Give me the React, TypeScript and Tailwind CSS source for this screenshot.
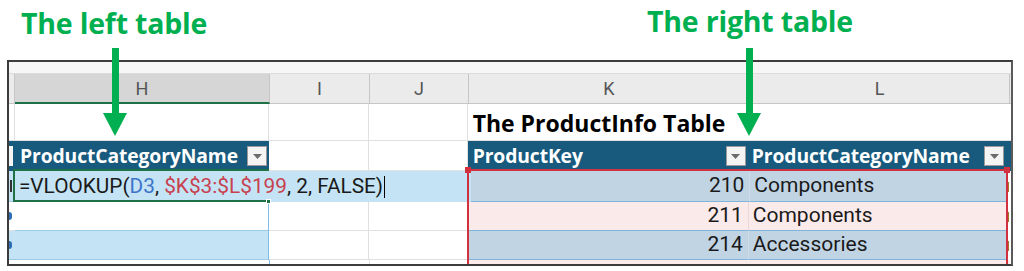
import React from 'react'

const cols = [
  { key: 'G', w: 6 },
  { key: 'H', w: 255 },
  { key: 'I', w: 100 },
  { key: 'J', w: 99 },
  { key: 'K', w: 281 },
  { key: 'L', w: 260 },
  { key: 'M', w: 4 },
]

const cellFont = { fontFamily: 'Roboto, "Liberation Sans", sans-serif' }
const boldFont = { fontFamily: '"Open Sans", sans-serif' }

function Dropdown() {
  return (
    <span className="w-[20px] h-[20px] bg-[#f4f4f4] border border-[#9a9a9a] flex items-center justify-center flex-shrink-0">
      <svg width="9" height="5" viewBox="0 0 9 5">
        <path d="M0 0 H9 L4.5 5 Z" fill="#6b6b6b" />
      </svg>
    </span>
  )
}

function Arrow({ left }: { left: string }) {
  return (
    <div className={`absolute top-[48px] ${left} w-[24px] h-[88px] flex flex-col items-center pointer-events-none`}>
      <div className="w-[7px] h-[65px] bg-[#00b050]" />
      <svg width="24" height="23" viewBox="0 0 24 23">
        <path d="M0 0 H24 L12 23 Z" fill="#00b050" />
      </svg>
    </div>
  )
}

export default function App() {
  const headerBg = (k: string) => (k === 'H' ? 'bg-[#d6d6d6]' : 'bg-[#ebebeb]')

  return (
    <div className="w-[1024px] h-[271px] bg-white relative overflow-hidden" style={cellFont}>
      {/* labels */}
      <div className="h-[60px] relative" style={boldFont}>
        <span className="absolute left-[21px] top-[2px] text-[28.5px] font-bold text-[#00b050] tracking-[-0.2px]">
          The left table
        </span>
        <span className="absolute left-[647px] top-[0px] text-[28.5px] font-bold text-[#00b050] tracking-[-0.2px]">
          The right table
        </span>
      </div>

      {/* sheet */}
      <div className="ml-[7px] w-[1006px] h-[206px] border-2 border-[#3c3c3c] border-r-[#5a5a5a] relative overflow-hidden">
        {/* top strip */}
        <div className="h-[12px] bg-[#f6f6f6] border-b border-[#dcdcdc]" />

        {/* column headers */}
        <div className="flex h-[30px]">
          {cols.map((c) => (
            <div
              key={c.key}
              style={{ width: c.w }}
              className={`${headerBg(c.key)} border-r border-[#c6c6c6] flex items-center justify-center text-[18px] text-[#555] flex-shrink-0 ${c.key === 'H' ? 'border-b-2 border-b-[#1e7145]' : 'border-b border-b-[#c6c6c6]'}`}
            >
              {c.key === 'G' || c.key === 'M' ? '' : c.key}
            </div>
          ))}
        </div>

        {/* row 1 */}
        <div className="flex h-[37px]">
          <div className="w-[6px] border-r border-b border-[#e0e0e0]" />
          <div className="w-[255px] border-r border-b border-[#e0e0e0]" />
          <div className="w-[100px] border-r border-b border-[#e0e0e0]" />
          <div className="w-[99px] border-r border-b border-[#e0e0e0]" />
          <div className="w-[541px] flex items-end pl-[5px] pb-[0px] border-b border-[#e0e0e0] text-[23px] font-bold text-black whitespace-nowrap" style={boldFont}>
            The ProductInfo Table
          </div>
          <div className="w-[4px] border-b border-[#e0e0e0]" />
        </div>

        {/* row 2 - table headers */}
        <div className="flex h-[30px]" style={boldFont}>
          <div className="w-[6px] bg-[#185a7d] flex items-center">
            <span className="w-[4px] h-[20px] bg-[#f4f4f4]" />
          </div>
          <div className="w-[255px] bg-[#185a7d] flex items-center justify-between pl-[5px] pr-[2px] text-[19.3px] font-bold text-white tracking-[-0.1px]">
            <span>ProductCategoryName</span>
            <Dropdown />
          </div>
          <div className="w-[100px] border-r border-b border-[#e0e0e0]" />
          <div className="w-[99px] border-r border-b border-[#e0e0e0]" />
          <div className="w-[281px] bg-[#185a7d] flex items-center justify-between pl-[5px] pr-[2px] text-[19.3px] font-bold text-white tracking-[-0.1px]">
            <span>ProductKey</span>
            <Dropdown />
          </div>
          <div className="w-[260px] bg-[#185a7d] flex items-center justify-between pl-[4px] pr-[3px] text-[19.3px] font-bold text-white tracking-[-0.1px]">
            <span>ProductCategoryName</span>
            <Dropdown />
          </div>
          <div className="w-[4px] bg-[#185a7d]" />
        </div>

        {/* row 3 - formula */}
        <div className="flex h-[31px]">
          <div className="w-[6px] bg-[#c4e4f5] border-b border-[#9cc9e6] flex items-center">
            <span className="w-[2px] h-[12px] bg-[#333] ml-[1px]" />
          </div>
          <div className="w-[460px] bg-[#c4e4f5] flex items-center pl-[4px] text-[20.8px] text-[#1a1a1a] whitespace-nowrap">
            <span>=VLOOKUP(</span>
            <span className="text-[#3e74c9]">D3</span>
            <span>,&nbsp;</span>
            <span className="text-[#c8414f]">$K$3:$L$199</span>
            <span>, 2, FALSE)</span>
            <span className="w-[1px] h-[22px] bg-black ml-[1px]" />
          </div>
          <div className="w-[281px] bg-[#c1d4e4] border-b border-[#7fb5dc] flex items-center justify-end pr-[5px] text-[21px] text-[#1a1a1a]">
            210
          </div>
          <div className="w-[260px] bg-[#c1d4e4] border-b border-l border-[#7fb5dc] border-l-[#d0dbe6] flex items-center pl-[4px] text-[21px] text-[#1a1a1a]">
            Components
          </div>
          <div className="w-[4px] flex items-center"><span className="w-[2px] h-[10px] bg-[#a5752a]" /></div>
        </div>

        {/* row 4 */}
        <div className="flex h-[29px]">
          <div className="w-[6px] border-b border-[#e0e0e0] flex items-center">
            <span className="w-[3px] h-[8px] bg-[#2f6db4] rounded-r-full" />
          </div>
          <div className="w-[255px] border-r border-r-[#7fbde6] border-b border-b-[#9cc9e6]" />
          <div className="w-[100px] border-r border-b border-[#e0e0e0]" />
          <div className="w-[99px] border-r border-b border-[#e0e0e0]" />
          <div className="w-[281px] bg-[#fbeaea] border-b border-[#7fb5dc] flex items-center justify-end pr-[5px] text-[21px] text-[#1a1a1a]">
            211
          </div>
          <div className="w-[260px] bg-[#fbeaea] border-b border-l border-[#7fb5dc] border-l-[#ead7d7] flex items-center pl-[4px] text-[21px] text-[#1a1a1a]">
            Components
          </div>
          <div className="w-[4px] flex items-center"><span className="w-[2px] h-[10px] bg-[#a5752a]" /></div>
        </div>

        {/* row 5 */}
        <div className="flex h-[29px]">
          <div className="w-[6px] bg-[#c4e4f5] border-b border-[#9cc9e6] flex items-center">
            <span className="w-[3px] h-[8px] bg-[#2f6db4] rounded-r-full" />
          </div>
          <div className="w-[255px] bg-[#c4e4f5] border-r border-r-[#7fbde6] border-b border-b-[#9cc9e6]" />
          <div className="w-[100px] border-r border-b border-[#e0e0e0]" />
          <div className="w-[99px] border-r border-b border-[#e0e0e0]" />
          <div className="w-[281px] bg-[#c1d4e4] border-b border-[#7fb5dc] flex items-center justify-end pr-[5px] text-[21px] text-[#1a1a1a]">
            214
          </div>
          <div className="w-[260px] bg-[#c1d4e4] border-b border-l border-[#7fb5dc] border-l-[#d0dbe6] flex items-center pl-[4px] text-[21px] text-[#1a1a1a]">
            Accessories
          </div>
          <div className="w-[4px] flex items-center"><span className="w-[2px] h-[10px] bg-[#a5752a]" /></div>
        </div>

        {/* row 6 (partial) */}
        <div className="flex h-[10px]">
          <div className="w-[6px]" />
          <div className="w-[255px] border-r border-[#7fbde6]" />
          <div className="w-[100px] border-r border-[#e0e0e0]" />
          <div className="w-[99px] border-r border-[#e0e0e0]" />
          <div className="w-[281px] bg-[#fbeaea]" />
          <div className="w-[260px] bg-[#fbeaea]" />
        </div>

        {/* active cell outline H3 */}
        <div className="absolute left-[4px] top-[107px] w-[256px] h-[33px] border-2 border-r-0 border-[#1e7145] pointer-events-none" />
        <div className="absolute left-[257px] top-[137px] w-[5px] h-[5px] bg-[#1e7145] border border-white pointer-events-none" />

        {/* range reference outline K3:L199 */}
        <div className="absolute left-[458px] top-[107px] w-[541px] h-[110px] border-2 border-b-0 border-[#d1313e] pointer-events-none" />
        <div className="absolute left-[456px] top-[105px] w-[6px] h-[6px] bg-[#d1313e] pointer-events-none" />
        <div className="absolute left-[995px] top-[105px] w-[6px] h-[6px] bg-[#d1313e] pointer-events-none" />
      </div>

      <Arrow left="left-[103px]" />
      <Arrow left="left-[737px]" />
    </div>
  )
}
